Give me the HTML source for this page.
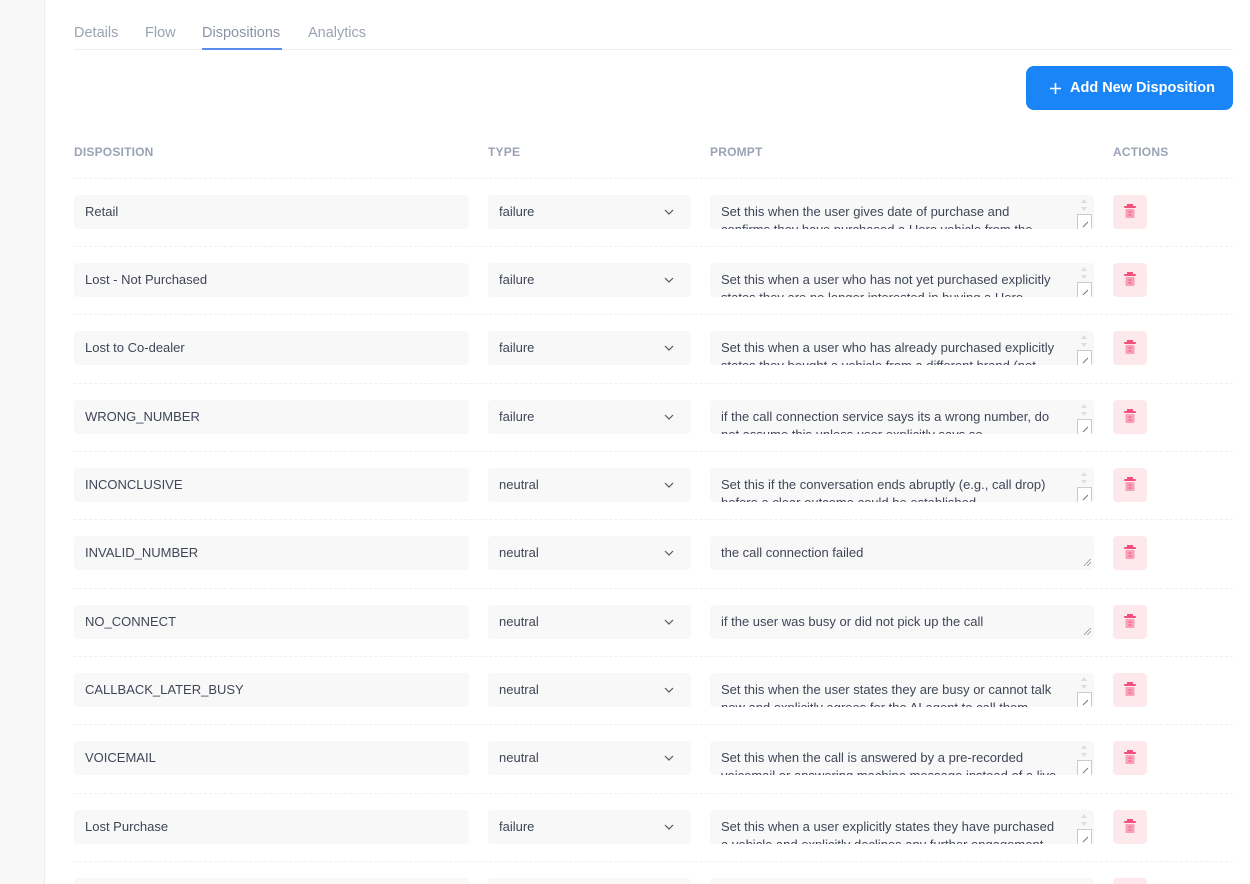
<!DOCTYPE html>
<html style="width:1250px;height:884px;overflow:hidden"><head><meta charset="utf-8"><style>
*{box-sizing:border-box;margin:0;padding:0}
body{width:1250px;height:884px;overflow:hidden;background:#fff;font-family:"Liberation Sans",sans-serif;position:relative;color:#374151}
.side{position:absolute;left:0;top:0;width:45px;height:884px;background:#f8f8f9;border-right:1px solid #ececef}
.tabs{position:absolute;left:74px;top:0;width:1159px;height:50px;border-bottom:1px solid #eceef1}
.tab{position:absolute;top:25px;font-size:14.5px;color:#9aa3b2}
.tab.act{color:#8a94a6}
.uline{position:absolute;left:202px;top:48px;width:80px;height:1.5px;background:#5b8def}
.btn{position:absolute;left:1026px;top:66px;width:207px;height:44px;background:#1a85f7;border-radius:8px;color:#fff;font-size:14.5px;font-weight:bold;line-height:44px;padding-left:44px}
.btn svg{position:absolute;left:23px;top:16px}
.hd{position:absolute;top:145px;font-size:12px;font-weight:bold;color:#9aa3b5;letter-spacing:.2px}
.div{position:absolute;left:74px;width:1159px;border-top:1px dashed #eeeff2}
.f{position:absolute;height:34px;background:#f8f8f9;border-radius:4px;font-size:13px;color:#3f4656;line-height:34px;padding-left:11px}
.ta{position:absolute;left:710px;width:384px;height:34px;background:#f8f8f9;border-radius:4px;font-size:13px;color:#3f4656;line-height:18px;padding:8px 36px 0 11px;overflow:hidden}
.ta .sp{position:absolute;right:2px;top:0;width:15px;height:17px;background:#f8f8f9}
.ta .sp:before{content:"";position:absolute;left:4px;top:4px;border:3.5px solid transparent;border-bottom:4px solid #dadde2;border-top:0}
.ta .sp:after{content:"";position:absolute;left:4px;top:12px;border:3.5px solid transparent;border-top:4px solid #dadde2;border-bottom:0}
.ta .rs{position:absolute;right:2px;bottom:0;width:15px;height:15px;background:#fff;border:1px solid #c8ccd2;border-bottom:0}
.ta .rs:after{content:"";position:absolute;right:2px;bottom:4px;width:7px;height:1px;background:#777;transform:rotate(-45deg)}
.ta.n .sp,.ta.n .rs{display:none}
.ta.n:after{content:"";position:absolute;right:3px;bottom:4px;width:7px;height:7px;background:linear-gradient(135deg,transparent 45%,#888 46%,#888 52%,transparent 53%,transparent 70%,#888 71%,#888 77%,transparent 78%)}
.ch{position:absolute;left:664px;width:10px;height:10px}
.del{position:absolute;left:1113px;width:34px;height:34px;background:#fde8ec;border-radius:4px}
.del svg{position:absolute;left:10px;top:8px}
</style></head><body>
<div class="side"></div>
<div class="tabs"></div>
<div class="tab" style="left:74px">Details</div>
<div class="tab" style="left:145px">Flow</div>
<div class="tab act" style="left:202px">Dispositions</div>
<div class="tab" style="left:308px">Analytics</div>
<div class="uline"></div>
<div class="btn"><svg width="13" height="13" viewBox="0 0 13 13"><path d="M6.5 1v11M1 6.5h11" stroke="#fff" stroke-width="1.6"/></svg>Add New Disposition</div>
<div class="hd" style="left:74px">DISPOSITION</div>
<div class="hd" style="left:488px">TYPE</div>
<div class="hd" style="left:710px">PROMPT</div>
<div class="hd" style="left:1113px">ACTIONS</div>

<div class="div" style="top:178px"></div>
<div class="f" style="left:74px;top:195px;width:395px">Retail</div>
<div class="f" style="left:488px;top:195px;width:203px">failure</div>
<svg class="ch" style="top:207px" viewBox="0 0 10 10"><path d="M1 3l4 4 4-4" fill="none" stroke="#555" stroke-width="1.2"/></svg>
<div class="ta" style="top:195px">Set this when the user gives date of purchase and<br>confirms they have purchased a Hero vehicle from the<div class="sp"></div><div class="rs"></div></div>
<div class="del" style="top:195px"><svg width="14" height="17" viewBox="0 0 14 17"><rect x="4" y="1" width="6" height="2" fill="#f0507a"/><rect x="1" y="3" width="12" height="2" rx="1" fill="#f0507a"/><rect x="2.5" y="6" width="9" height="9" rx="1" fill="#f7a1b6"/><path d="M5.5 9h3M5.5 12h3" stroke="#f0507a" stroke-width="1"/></svg></div>

<div class="div" style="top:246px"></div>
<div class="f" style="left:74px;top:263px;width:395px">Lost - Not Purchased</div>
<div class="f" style="left:488px;top:263px;width:203px">failure</div>
<svg class="ch" style="top:275px" viewBox="0 0 10 10"><path d="M1 3l4 4 4-4" fill="none" stroke="#555" stroke-width="1.2"/></svg>
<div class="ta" style="top:263px">Set this when a user who has not yet purchased explicitly states they are no longer interested in buying a Hero<div class="sp"></div><div class="rs"></div></div>
<div class="del" style="top:263px"><svg width="14" height="17" viewBox="0 0 14 17"><rect x="4" y="1" width="6" height="2" fill="#f0507a"/><rect x="1" y="3" width="12" height="2" rx="1" fill="#f0507a"/><rect x="2.5" y="6" width="9" height="9" rx="1" fill="#f7a1b6"/><path d="M5.5 9h3M5.5 12h3" stroke="#f0507a" stroke-width="1"/></svg></div>

<div class="div" style="top:314px"></div>
<div class="f" style="left:74px;top:331px;width:395px">Lost to Co-dealer</div>
<div class="f" style="left:488px;top:331px;width:203px">failure</div>
<svg class="ch" style="top:343px" viewBox="0 0 10 10"><path d="M1 3l4 4 4-4" fill="none" stroke="#555" stroke-width="1.2"/></svg>
<div class="ta" style="top:331px">Set this when a user who has already purchased explicitly states they bought a vehicle from a different brand (not<div class="sp"></div><div class="rs"></div></div>
<div class="del" style="top:331px"><svg width="14" height="17" viewBox="0 0 14 17"><rect x="4" y="1" width="6" height="2" fill="#f0507a"/><rect x="1" y="3" width="12" height="2" rx="1" fill="#f0507a"/><rect x="2.5" y="6" width="9" height="9" rx="1" fill="#f7a1b6"/><path d="M5.5 9h3M5.5 12h3" stroke="#f0507a" stroke-width="1"/></svg></div>

<div class="div" style="top:383px"></div>
<div class="f" style="left:74px;top:400px;width:395px">WRONG_NUMBER</div>
<div class="f" style="left:488px;top:400px;width:203px">failure</div>
<svg class="ch" style="top:412px" viewBox="0 0 10 10"><path d="M1 3l4 4 4-4" fill="none" stroke="#555" stroke-width="1.2"/></svg>
<div class="ta" style="top:400px">if the call connection service says its a wrong number, do not assume this unless user explicitly says so<div class="sp"></div><div class="rs"></div></div>
<div class="del" style="top:400px"><svg width="14" height="17" viewBox="0 0 14 17"><rect x="4" y="1" width="6" height="2" fill="#f0507a"/><rect x="1" y="3" width="12" height="2" rx="1" fill="#f0507a"/><rect x="2.5" y="6" width="9" height="9" rx="1" fill="#f7a1b6"/><path d="M5.5 9h3M5.5 12h3" stroke="#f0507a" stroke-width="1"/></svg></div>

<div class="div" style="top:451px"></div>
<div class="f" style="left:74px;top:468px;width:395px">INCONCLUSIVE</div>
<div class="f" style="left:488px;top:468px;width:203px">neutral</div>
<svg class="ch" style="top:480px" viewBox="0 0 10 10"><path d="M1 3l4 4 4-4" fill="none" stroke="#555" stroke-width="1.2"/></svg>
<div class="ta" style="top:468px">Set this if the conversation ends abruptly (e.g., call drop) before a clear outcome could be established<div class="sp"></div><div class="rs"></div></div>
<div class="del" style="top:468px"><svg width="14" height="17" viewBox="0 0 14 17"><rect x="4" y="1" width="6" height="2" fill="#f0507a"/><rect x="1" y="3" width="12" height="2" rx="1" fill="#f0507a"/><rect x="2.5" y="6" width="9" height="9" rx="1" fill="#f7a1b6"/><path d="M5.5 9h3M5.5 12h3" stroke="#f0507a" stroke-width="1"/></svg></div>

<div class="div" style="top:519px"></div>
<div class="f" style="left:74px;top:536px;width:395px">INVALID_NUMBER</div>
<div class="f" style="left:488px;top:536px;width:203px">neutral</div>
<svg class="ch" style="top:548px" viewBox="0 0 10 10"><path d="M1 3l4 4 4-4" fill="none" stroke="#555" stroke-width="1.2"/></svg>
<div class="ta n" style="top:536px">the call connection failed</div>
<div class="del" style="top:536px"><svg width="14" height="17" viewBox="0 0 14 17"><rect x="4" y="1" width="6" height="2" fill="#f0507a"/><rect x="1" y="3" width="12" height="2" rx="1" fill="#f0507a"/><rect x="2.5" y="6" width="9" height="9" rx="1" fill="#f7a1b6"/><path d="M5.5 9h3M5.5 12h3" stroke="#f0507a" stroke-width="1"/></svg></div>

<div class="div" style="top:588px"></div>
<div class="f" style="left:74px;top:605px;width:395px">NO_CONNECT</div>
<div class="f" style="left:488px;top:605px;width:203px">neutral</div>
<svg class="ch" style="top:617px" viewBox="0 0 10 10"><path d="M1 3l4 4 4-4" fill="none" stroke="#555" stroke-width="1.2"/></svg>
<div class="ta n" style="top:605px">if the user was busy or did not pick up the call</div>
<div class="del" style="top:605px"><svg width="14" height="17" viewBox="0 0 14 17"><rect x="4" y="1" width="6" height="2" fill="#f0507a"/><rect x="1" y="3" width="12" height="2" rx="1" fill="#f0507a"/><rect x="2.5" y="6" width="9" height="9" rx="1" fill="#f7a1b6"/><path d="M5.5 9h3M5.5 12h3" stroke="#f0507a" stroke-width="1"/></svg></div>

<div class="div" style="top:656px"></div>
<div class="f" style="left:74px;top:673px;width:395px">CALLBACK_LATER_BUSY</div>
<div class="f" style="left:488px;top:673px;width:203px">neutral</div>
<svg class="ch" style="top:685px" viewBox="0 0 10 10"><path d="M1 3l4 4 4-4" fill="none" stroke="#555" stroke-width="1.2"/></svg>
<div class="ta" style="top:673px">Set this when the user states they are busy or cannot talk now and explicitly agrees for the AI agent to call them<div class="sp"></div><div class="rs"></div></div>
<div class="del" style="top:673px"><svg width="14" height="17" viewBox="0 0 14 17"><rect x="4" y="1" width="6" height="2" fill="#f0507a"/><rect x="1" y="3" width="12" height="2" rx="1" fill="#f0507a"/><rect x="2.5" y="6" width="9" height="9" rx="1" fill="#f7a1b6"/><path d="M5.5 9h3M5.5 12h3" stroke="#f0507a" stroke-width="1"/></svg></div>

<div class="div" style="top:724px"></div>
<div class="f" style="left:74px;top:741px;width:395px">VOICEMAIL</div>
<div class="f" style="left:488px;top:741px;width:203px">neutral</div>
<svg class="ch" style="top:753px" viewBox="0 0 10 10"><path d="M1 3l4 4 4-4" fill="none" stroke="#555" stroke-width="1.2"/></svg>
<div class="ta" style="top:741px">Set this when the call is answered by a pre-recorded voicemail or answering machine message instead of a live<div class="sp"></div><div class="rs"></div></div>
<div class="del" style="top:741px"><svg width="14" height="17" viewBox="0 0 14 17"><rect x="4" y="1" width="6" height="2" fill="#f0507a"/><rect x="1" y="3" width="12" height="2" rx="1" fill="#f0507a"/><rect x="2.5" y="6" width="9" height="9" rx="1" fill="#f7a1b6"/><path d="M5.5 9h3M5.5 12h3" stroke="#f0507a" stroke-width="1"/></svg></div>

<div class="div" style="top:793px"></div>
<div class="f" style="left:74px;top:810px;width:395px">Lost Purchase</div>
<div class="f" style="left:488px;top:810px;width:203px">failure</div>
<svg class="ch" style="top:822px" viewBox="0 0 10 10"><path d="M1 3l4 4 4-4" fill="none" stroke="#555" stroke-width="1.2"/></svg>
<div class="ta" style="top:810px">Set this when a user explicitly states they have purchased a vehicle and explicitly declines any further engagement<div class="sp"></div><div class="rs"></div></div>
<div class="del" style="top:810px"><svg width="14" height="17" viewBox="0 0 14 17"><rect x="4" y="1" width="6" height="2" fill="#f0507a"/><rect x="1" y="3" width="12" height="2" rx="1" fill="#f0507a"/><rect x="2.5" y="6" width="9" height="9" rx="1" fill="#f7a1b6"/><path d="M5.5 9h3M5.5 12h3" stroke="#f0507a" stroke-width="1"/></svg></div>

<div class="div" style="top:861px"></div>
<div class="f" style="left:74px;top:878px;width:395px;height:6px;border-radius:4px 4px 0 0"></div>
<div class="f" style="left:488px;top:878px;width:203px;height:6px;border-radius:4px 4px 0 0"></div>
<div class="f" style="left:710px;top:878px;width:384px;height:6px;border-radius:4px 4px 0 0"></div>
<div class="del" style="top:878px;height:6px;border-radius:4px 4px 0 0"></div>
</body></html>
